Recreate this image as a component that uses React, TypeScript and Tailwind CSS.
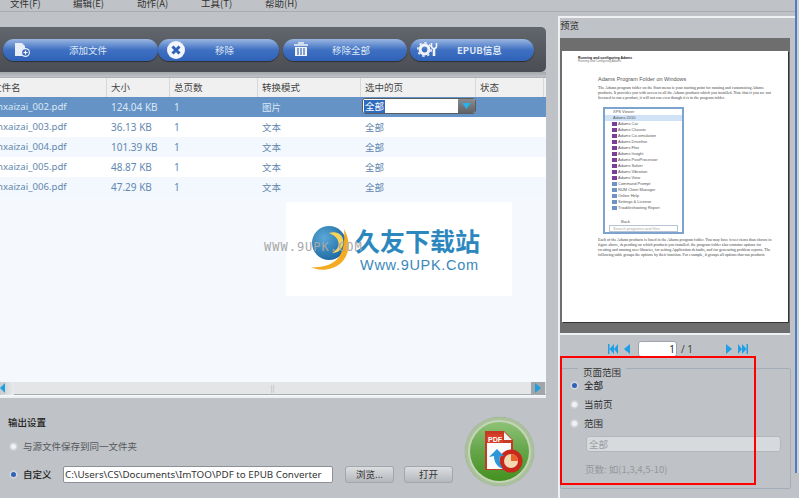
import React from "react";

const cjk = "font-['Noto_Sans_CJK_SC','Noto_Sans',sans-serif]";

function Radio({ on }: { on?: boolean }) {
  return (
    <span className="w-[9px] h-[9px] rounded-full flex items-center justify-center shrink-0 bg-[#d8dadd] border border-[#c9ccd0]">
      <span className={on ? "w-[5px] h-[5px] rounded-full bg-[#2f62b8]" : "w-[5px] h-[5px] rounded-full bg-[#f1f2f3]"} />
    </span>
  );
}

function ToolButton({ w, icon, label, bold, ml, tx }: { w: string; icon: React.ReactNode; label: string; bold?: boolean; ml?: string; tx: string }) {
  return (
    <div className={`${w} ${ml ?? ""} h-[22px] rounded-full bg-gradient-to-b from-[#9ab6e0] via-[#3f70c2] to-[#2f62b8] shadow-[0_1px_1px_#2c2f33] flex items-center relative shrink-0`}>
      <span className="w-[36px] flex justify-center shrink-0">{icon}</span>
      <span className={`${tx} text-[9.5px] leading-[14px] text-[#dfe8f5] whitespace-nowrap ${bold ? "font-bold" : ""}`}>{label}</span>
    </div>
  );
}

const rows = [
  { n: "nxaizai_002.pdf", s: "124.04 KB", m: "图片" },
  { n: "nxaizai_003.pdf", s: "36.13 KB", m: "文本" },
  { n: "nxaizai_004.pdf", s: "101.39 KB", m: "文本" },
  { n: "nxaizai_005.pdf", s: "48.87 KB", m: "文本" },
  { n: "nxaizai_006.pdf", s: "47.29 KB", m: "文本" },
];

const menuItems = ["Adams Car", "Adams Chassis", "Adams Co-simulation", "Adams Driveline", "Adams Flex", "Adams Insight", "Adams PostProcessor", "Adams Solver", "Adams Vibration", "Adams View"];
const menuItems2 = ["Command Prompt", "NUM Client Manager", "Online Help", "Settings & License", "Troubleshooting Report"];

function Preview() {
  return (
    <div className="h-[271px] bg-white mx-[2px] shadow-[1px_1px_0_#333] pl-[36px] pt-[5px] overflow-hidden font-['Liberation_Serif',serif] text-[#444]">
      <div className="-ml-[20px] text-[3.5px] leading-[4px] font-['Liberation_Sans',sans-serif] font-bold text-[#222] whitespace-nowrap">Running and configuring Adams</div>
      <div className="-ml-[20px] text-[3px] leading-[3px] font-['Liberation_Sans',sans-serif] text-[#777] whitespace-nowrap">Running and Configuring Adams</div>
      <div className="mt-[13px] text-[5.5px] leading-[7px] font-['Liberation_Sans',sans-serif] text-[#555] whitespace-nowrap">Adams Program Folder on Windows</div>
      <div className="mt-[2px] text-[4px] leading-[5px] whitespace-nowrap">
        <div>The Adams program folder on the Start menu is your starting point for running and customizing Adams</div>
        <div>products. It provides you with access to all the Adams products which you installed. Note that if you are not</div>
        <div>licensed to run a product, it will not run even though it is in the program folder.</div>
      </div>
      <div className="mt-[7px] ml-[5px] w-[81px] h-[127px] border-2 border-[#7da4cf] bg-white flex flex-col font-['Liberation_Sans',sans-serif] text-[4px] text-[#555]">
        <div className="h-[6px] leading-[6px] pl-[8px]">XPS Viewer</div>
        <div className="h-[6px] leading-[6px] pl-[8px] bg-[#cfe2f6]">Adams 2010</div>
        {[...menuItems, ...menuItems2].map((m, i) => (
          <div key={m} className="h-[6px] flex items-center pl-[7px] gap-[1px]">
            <span className={i < 10 ? "w-[5px] h-[4px] bg-[#7c3f98]" : "w-[5px] h-[4px] bg-[#6f93c7]"} />
            <span className="whitespace-nowrap">{m}</span>
          </div>
        ))}
        <div className="mt-[8px] h-[6px] leading-[6px] pl-[16px]">Back</div>
        <div className="mt-auto mb-[4px] mx-[4px] h-[7px] border border-[#b8c4d2] bg-white leading-[5px] pl-[3px] text-[#aaa] whitespace-nowrap">Search programs and files</div>
      </div>
      <div className="mt-[4px] text-[4px] leading-[4.9px] whitespace-nowrap">
        <div>Each of the Adams products is listed in the Adams program folder. You may have fewer items than shown in</div>
        <div>figure above, depending on which products you installed. the program folder also contains options for</div>
        <div>creating and running user libraries, for setting Application defaults, and for generating problem reports. The</div>
        <div>following table groups the options by their function. For example, it groups all options that run products</div>
      </div>
    </div>
  );
}

export default function App() {
  return (
    <div className={`relative w-[799px] h-[498px] overflow-hidden bg-[#bfc2c6] ${cjk} text-[#2b2d30]`}>
      {/* menu */}
      <div className="h-[12px] border-b border-[#a9acb0] relative overflow-hidden">
        <div className="flex -mt-[4px] pl-[10px] text-[9.5px] leading-[15px] text-[#333]">
          <span className="w-[63px]">文件(F)</span>
          <span className="w-[64px]">编辑(E)</span>
          <span className="w-[64px]">动作(A)</span>
          <span className="w-[64px]">工具(T)</span>
          <span>帮助(H)</span>
        </div>
      </div>

      <div className="flex h-[486px]">
        {/* left column */}
        <div className="w-[546px] shrink-0 flex flex-col">
          <div className="mt-[15px] h-[45px] rounded-r-[5px] bg-gradient-to-b from-[#62666d] to-[#4a4d53] flex items-center pl-[3px]">
            <ToolButton w="w-[155px]" tx="ml-[30px]" label="添加文件" icon={
              <svg width="18" height="16" viewBox="0 0 18 16" className="ml-[1px]"><path d="M2 1h7l3 3v3a4 4 0 0 0-2 7H2z" fill="#e8eef8" /><circle cx="12.5" cy="10.5" r="4.5" fill="#e8eef8" /><circle cx="12.5" cy="10.5" r="3.3" fill="#3a6abb" /><path d="M10.5 10.5h4M12.5 8.5v4" stroke="#fff" strokeWidth="1.2" /></svg>
            } />
            <ToolButton w="w-[121px]" tx="ml-[21px]" label="移除" icon={
              <svg width="20" height="20" viewBox="0 0 20 20"><circle cx="10" cy="10" r="9" fill="#f2f5fa" /><path d="M6.5 6.5l7 7M13.5 6.5l-7 7" stroke="#2f62b8" strokeWidth="3" /></svg>
            } />
            <ToolButton w="w-[124px]" ml="ml-[4px]" tx="ml-[13px]" label="移除全部" icon={
              <svg width="16" height="15" viewBox="0 0 16 15"><path d="M1 3h14M5 1h6" stroke="#f0f3f8" strokeWidth="1.4" /><path d="M2 5h12v9H2z" fill="#f0f3f8" /><path d="M5 6v7M8 6v7M11 6v7" stroke="#3a6abb" strokeWidth="1.2" /></svg>
            } />
            <ToolButton w="w-[124px]" ml="ml-[3px]" tx="ml-[11px]" bold label="EPUB信息" icon={
              <svg width="22" height="15" viewBox="0 0 22 15"><circle cx="7.5" cy="7.5" r="4.4" fill="none" stroke="#f0f3f8" strokeWidth="3" /><circle cx="7.5" cy="7.5" r="6.7" fill="none" stroke="#f0f3f8" strokeWidth="1.6" strokeDasharray="2.4 2.8" /><path d="M17 6v8" stroke="#f0f3f8" strokeWidth="2.6" /><path d="M14.5 1v3a2.5 2.5 0 0 0 5 0V1" fill="none" stroke="#f0f3f8" strokeWidth="1.6" /></svg>
            } />
          </div>
          <div className="h-[5px] bg-gradient-to-b from-[#a3a6aa] to-[#bfc2c6]" />

          {/* table */}
          <div className="h-[321px] bg-[#f5f9fe] flex flex-col border-b-2 border-b-[#eef0f2]">
            <div className="h-[20px] flex bg-[#f0f0f0] text-[9.5px] leading-[19px] text-[#444] border-t border-[#aeb0b3] shrink-0">
              <span className="w-[107px] -indent-[8px] border-r border-[#d8d8d8] overflow-hidden">文件名</span>
              <span className="w-[63px] pl-[4px] border-r border-[#d8d8d8]">大小</span>
              <span className="w-[88px] pl-[4px] border-r border-[#d8d8d8]">总页数</span>
              <span className="w-[103px] pl-[4px] border-r border-[#d8d8d8]">转换模式</span>
              <span className="w-[115px] pl-[4px] border-r border-[#d8d8d8]">选中的页</span>
              <span className="w-[68px] pl-[4px] border-r border-[#d8d8d8]">状态</span>
            </div>
            {rows.map((r, i) => (
              <div key={r.n} className={`h-[20px] flex text-[9.5px] leading-[20px] shrink-0 ${i === 0 ? "bg-[#6593c6] text-[#dce8f5]" : i % 2 ? "bg-white text-[#6287ae]" : "bg-[#f3f8fe] text-[#6287ae]"}`}>
                <span className="w-[107px] -ml-[3px] mr-[3px] text-[9.6px] font-['Noto_Sans',sans-serif] whitespace-nowrap">{r.n}</span>
                <span className="w-[63px] pl-[4px] text-[10px] font-['Noto_Sans',sans-serif]">{r.s}</span>
                <span className="w-[88px] pl-[4px] text-[10px] font-['Noto_Sans',sans-serif]">1</span>
                <span className="w-[103px] pl-[4px]">{r.m}</span>
                {i === 0 ? (
                  <span className="w-[115px] pl-[1px] pt-[1px]">
                    <span className="flex w-[114px] h-[16px] rounded-[3px] bg-white overflow-hidden border border-[#5a5d60]">
                      <span className="flex-1 pl-[1px] flex items-center">
                        <span className="bg-[#2f6cc0] text-white leading-[13px] px-[1px] h-[13px]">全部</span>
                      </span>
                      <span className="w-[17px] bg-gradient-to-b from-[#8a8d90] to-[#606366] flex items-center justify-center">
                        <svg width="9" height="6" viewBox="0 0 9 6"><path d="M0 0h9L4.5 6z" fill="#2cb0e8" /></svg>
                      </span>
                    </span>
                  </span>
                ) : (
                  <span className="w-[115px] pl-[4px]">全部</span>
                )}
              </div>
            ))}
            <div className="flex-1" />
            <div className="h-[13px] mb-[1px] flex items-center bg-[#e4e5e6] border-b border-[#a9acaf] shrink-0">
              <span className="w-[14px] h-[13px] bg-gradient-to-r from-[#c9cccf] to-[#e9eaeb] flex items-center">
                <svg width="5" height="10" viewBox="0 0 5 10"><path d="M5 0v10L0 5z" fill="#1d9fe0" /></svg>
              </span>
              <span className="flex-1 text-center text-[7px] leading-[12px] text-[#aaa]">||</span>
              <span className="w-[14px] h-[13px] bg-[#a3a6a9] flex items-center justify-center mr-[1px]">
                <svg width="6" height="10" viewBox="0 0 6 10"><path d="M0 0v10l6-5z" fill="#1d9fe0" /></svg>
              </span>
            </div>
          </div>

          {/* output */}
          <div className="pl-[8px] pt-[17px] text-[9.5px]">
            <div className="leading-[14px] font-medium text-[#222]">输出设置</div>
            <div className="mt-[10px] pl-[1px] flex items-center gap-[5px] h-[14px] text-[#55585c]">
              <Radio /><span className="leading-[14px]">与源文件保存到同一文件夹</span>
            </div>
            <div className="mt-[13px] pl-[1px] flex items-center h-[17px]">
              <Radio on />
              <span className="ml-[5px] w-[40px] font-medium text-[#222]">自定义</span>
              <div className="w-[270px] h-[17px] rounded-[2px] bg-white border border-[#8d9094] font-['Noto_Sans',sans-serif] text-[9.8px] leading-[15px] pl-[1px] text-[#333] whitespace-nowrap overflow-hidden">C:\Users\CS\Documents\ImTOO\PDF to EPUB Converter</div>
              <div className="ml-[12px] w-[49px] h-[17px] rounded-[3px] bg-gradient-to-b from-[#dcdee0] to-[#b5b8bc] border border-[#a3a6aa] text-center leading-[15px] text-[#333]">浏览...</div>
              <div className="ml-[10px] w-[49px] h-[17px] rounded-[3px] bg-gradient-to-b from-[#dcdee0] to-[#b5b8bc] border border-[#a3a6aa] text-center leading-[15px] text-[#333]">打开</div>
            </div>
          </div>
        </div>

        {/* right panel */}
        <div className="ml-[12px] mt-[4px] w-[238px] h-[482px] shrink-0 flex flex-col border-t-2 border-l-2 border-[#eef0f2]">
          <div className="h-[20px] leading-[14px] text-[9.5px] text-[#333] shrink-0">预览</div>
          <div className="w-[230px] h-[297px] bg-[#6e6e6e] pt-[13px] border-b-2 border-[#eef0f2] shrink-0">
            <Preview />
          </div>
          <div className="mt-[6px] h-[16px] w-[230px] flex items-center pl-[48px] shrink-0">
            <svg width="10" height="10" viewBox="0 0 10 10"><path d="M0 0h1.5v10H0zM6 0v10L1.5 5zM10 0v10L6 5z" fill="#1e9fe6" /></svg>
            <svg className="ml-[6px]" width="6" height="10" viewBox="0 0 6 10"><path d="M6 0v10L0 5z" fill="#1e9fe6" /></svg>
            <div className="ml-[8px] w-[39px] h-[16px] rounded-[3px] bg-white border border-[#a0a3a7] text-right pr-[1px] text-[10px] leading-[15px] font-['Noto_Sans',sans-serif]">1</div>
            <span className="ml-[4px] text-[10px] font-['Noto_Sans',sans-serif] text-[#444]">/ 1</span>
            <svg className="ml-[33px]" width="6" height="10" viewBox="0 0 6 10"><path d="M0 0v10l6-5z" fill="#1e9fe6" /></svg>
            <svg className="ml-[6px]" width="10" height="10" viewBox="0 0 10 10"><path d="M0 0v10l4-5zM4 0v10l4.5-5zM8.5 0H10v10H8.5z" fill="#1e9fe6" /></svg>
          </div>
          <div className="mt-[11px] w-[231px] h-[121px] border border-[#a4adb8] rounded-[2px] pl-[9px] pt-[9px] relative shrink-0">
            <span className="absolute left-[17px] -top-[4px] px-[5px] bg-[#bfc2c6] text-[9.5px] leading-[14px] text-[#333]">页面范围</span>
            <div className="flex items-center gap-[5px] h-[14px] text-[9.5px] font-medium"><Radio on />全部</div>
            <div className="flex items-center gap-[5px] h-[14px] mt-[5px] text-[9.5px]"><Radio />当前页</div>
            <div className="flex items-center gap-[5px] h-[14px] mt-[5px] text-[9.5px]"><Radio />范围</div>
            <div className="mt-[6px] ml-[16px] w-[195px] h-[16px] rounded-[3px] bg-[#d7dadd] border border-[#b3b6ba] text-[9.5px] leading-[14px] pl-[2px] text-[#9a9da1]">全部</div>
            <div className="mt-[10px] ml-[15px] text-[9.5px] leading-[14px] text-[#95989c]">页数: 如(1,3,4,5-10)</div>
          </div>
        </div>
      </div>

      {/* right edge */}
      <div className="absolute left-[795px] top-0 h-[473px] w-[2px] bg-[#4b7fbe]" />
      <div className="absolute left-[797px] top-0 h-[473px] w-[2px] bg-[#cdd0d4]" />

      {/* red annotation */}
      <div className="absolute left-[560px] top-[356px] w-[196px] h-[129px] border-2 border-[#f00]" />

      {/* watermark */}
      <div className="absolute left-[286px] top-[202px] w-[226px] h-[94px] bg-white flex items-center">
        <svg className="ml-[23px] shrink-0" width="44" height="48" viewBox="0 0 44 48">
          <defs>
            <radialGradient id="g1" cx="0.35" cy="0.35" r="0.8"><stop offset="0" stopColor="#5aa9d8" /><stop offset="1" stopColor="#155f9a" /></radialGradient>
          </defs>
          <circle cx="20" cy="18" r="17" fill="url(#g1)" />
          <path d="M20 8c9-3 16 3 14 12-2 7-8 8-11 8 5-3 8-7 6-12-1-4-5-6-9-8z" fill="#f8d35a" />
          <path d="M35 4c7 12 6 25-3 34-8 7-21 9-30 4 11 1 22-2 28-10 5-7 6-18 5-28z" fill="#f4ab22" />
        </svg>
        <div className="ml-[2px] flex flex-col items-start">
          <span className="text-[25px] leading-[30px] font-bold text-[#2b87bd] whitespace-nowrap">久友下载站</span>
          <span className="mt-[2px] ml-[5px] text-[14.5px] leading-[16px] tracking-[0.7px] text-[#3a88bb] font-['Liberation_Sans',sans-serif] whitespace-nowrap">Www.9UPK.Com</span>
        </div>
      </div>
      <span className="absolute left-[264px] top-[240px] text-[12px] leading-[14px] tracking-[1px] text-[#a8a8a8] font-['DejaVu_Sans_Mono',monospace] whitespace-nowrap">WWW.9UPK.COM</span>

      {/* convert button */}
      <div className="absolute left-[465px] top-[417px] w-[69px] h-[69px] rounded-full bg-[#c5d3b8] border-[3px] border-[#a9c29a] flex items-center justify-center shadow-[0_0_1px_#8a9a80]">
        <div className="w-[59px] h-[59px] rounded-full bg-gradient-to-b from-[#8ec276] via-[#64a548] to-[#44911e] flex items-center justify-center">
          <svg width="44" height="44" viewBox="0 0 44 44" className="overflow-visible">
            <path d="M7 1h19l9 9v30H7z" fill="#c53a22" />
            <path d="M9 13h24v26H9z" fill="#fbfbfb" />
            <path d="M26 2l8 8h-8z" fill="#f3f3f3" />
            <rect x="9" y="4" width="16" height="9" fill="#d8402a" />
            <text x="10" y="11.5" fontSize="7" fontWeight="700" fill="#fff" fontFamily="Liberation Sans, sans-serif">PDF</text>
            <circle cx="33" cy="31" r="11.5" fill="#c9281c" />
            <circle cx="33" cy="31" r="7" fill="#f3d9b4" />
            <path d="M33 31v-7a7 7 0 0 1 7 7z" fill="#e8622a" />
            <path d="M11 27l8-8 7 7h-4c-1 5 0 9 3 13-6-2-9-7-9-13z" fill="#2b97d8" />
          </svg>
        </div>
      </div>
    </div>
  );
}
